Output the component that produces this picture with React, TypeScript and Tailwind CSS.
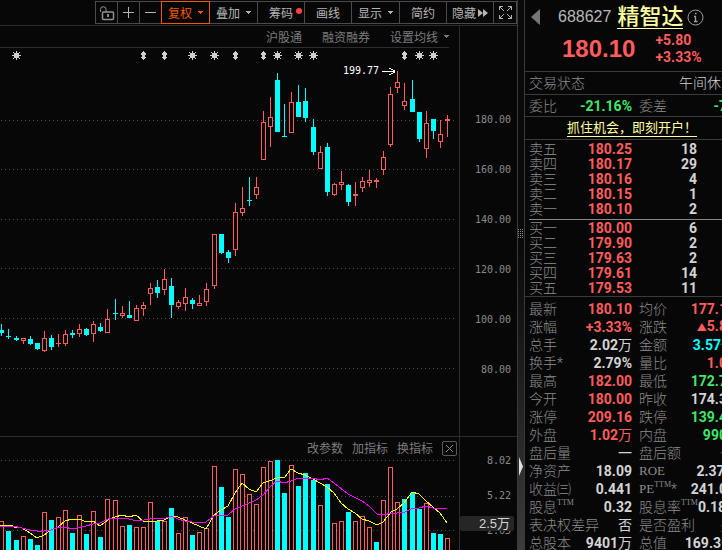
import React from 'react';

type Tone = 'up' | 'down' | 'flat' | 'cyan';

const TONES: Record<Tone, string> = {
  up: 'text-[#ff5c5c]',
  down: 'text-[#3fe669]',
  flat: 'text-[#d4d4d4]',
  cyan: 'text-[#00ffff]',
};

const RED = '#ff5c5c';
const CYAN = '#00ffff';

// x, high, body top, body bottom, low, falling, volume top, volume falling
const CANDLES: number[][] = [
  [1, 324, 330, 333, 336, 1, 521, 0],
  [8, 329, 336, 337, 339, 1, 531, 1],
  [16, 336, 338, 340, 341, 1, 540, 1],
  [23, 338, 338, 341, 344, 0, 536, 0],
  [30, 336, 339, 344, 345, 1, 539, 1],
  [37, 343, 343, 349, 350, 1, 545, 1],
  [44, 331, 338, 351, 352, 0, 512, 0],
  [51, 335, 338, 347, 350, 1, 520, 1],
  [58, 334, 343, 344, 347, 0, 517, 0],
  [65, 330, 334, 344, 346, 0, 510, 0],
  [72, 330, 333, 335, 338, 1, 533, 1],
  [79, 324, 329, 334, 337, 0, 515, 0],
  [86, 328, 329, 335, 336, 1, 534, 1],
  [93, 321, 324, 334, 342, 0, 511, 0],
  [100, 323, 327, 331, 332, 1, 537, 1],
  [107, 309, 319, 333, 333, 0, 499, 0],
  [115, 299, 313, 314, 320, 1, 500, 0],
  [122, 306, 313, 316, 318, 0, 526, 0],
  [129, 301, 315, 318, 318, 1, 525, 1],
  [136, 305, 308, 321, 321, 0, 527, 0],
  [143, 302, 305, 309, 316, 0, 527, 0],
  [150, 283, 288, 294, 305, 0, 502, 0],
  [157, 280, 287, 293, 298, 1, 521, 1],
  [164, 269, 279, 290, 295, 0, 521, 0],
  [171, 278, 286, 305, 318, 1, 508, 1],
  [178, 300, 302, 307, 309, 0, 533, 0],
  [185, 288, 297, 304, 311, 0, 517, 0],
  [192, 298, 300, 304, 309, 1, 535, 1],
  [199, 295, 303, 306, 306, 0, 532, 0],
  [206, 283, 289, 302, 306, 0, 528, 0],
  [214, 234, 234, 286, 289, 0, 466, 0],
  [221, 234, 234, 253, 254, 1, 487, 1],
  [228, 250, 252, 258, 263, 1, 517, 1],
  [235, 203, 212, 250, 256, 0, 469, 0],
  [242, 187, 208, 213, 216, 0, 474, 0],
  [249, 177, 200, 201, 206, 1, 494, 0],
  [256, 177, 187, 195, 199, 0, 504, 0],
  [263, 111, 122, 160, 160, 0, 467, 0],
  [270, 97, 117, 127, 147, 0, 461, 0],
  [277, 73, 80, 132, 132, 1, 460, 1],
  [284, 104, 136, 137, 137, 1, 493, 1],
  [291, 92, 102, 133, 133, 0, 465, 0],
  [298, 85, 102, 117, 117, 1, 486, 1],
  [305, 88, 101, 118, 122, 1, 473, 1],
  [313, 119, 127, 152, 155, 1, 480, 1],
  [320, 146, 152, 169, 169, 0, 505, 0],
  [327, 143, 147, 192, 196, 1, 484, 1],
  [334, 183, 184, 195, 196, 0, 523, 0],
  [341, 171, 182, 185, 190, 0, 521, 0],
  [348, 184, 185, 202, 206, 1, 512, 1],
  [355, 182, 194, 196, 206, 0, 521, 0],
  [362, 177, 181, 188, 192, 0, 516, 0],
  [369, 170, 180, 183, 187, 0, 527, 0],
  [376, 178, 180, 182, 188, 0, 542, 1],
  [383, 151, 157, 170, 175, 0, 500, 0],
  [390, 87, 94, 145, 147, 0, 467, 0],
  [397, 71, 82, 88, 93, 0, 502, 0],
  [404, 83, 101, 106, 110, 0, 499, 1],
  [412, 80, 99, 112, 112, 1, 493, 1],
  [419, 112, 112, 139, 142, 1, 509, 1],
  [426, 111, 123, 149, 158, 0, 503, 0],
  [433, 119, 119, 131, 139, 1, 533, 1],
  [440, 120, 134, 142, 148, 0, 534, 1],
  [447, 115, 119, 121, 137, 0, 538, 0],
];

const MA_FAST =
  '0,525 11,525 14,527 22,528 30,533 37,538 44,535 51,530 58,527 65,521 72,519 80,519 86,522 93,521 100,526 109,519 115,517 122,515 129,517 136,515 143,521 157,521 164,520 171,516 178,517 185,520 192,523 199,526 206,529 214,515 221,510 228,506 235,493 242,483 249,489 256,492 263,483 269,481 277,478 285,477 291,469 298,473 305,475 313,479 320,483 327,487 334,493 341,503 348,509 355,513 362,519 369,521 377,525 383,522 391,512 397,509 404,503 412,492 419,494 426,501 433,507 440,513 447,523';
const MA_SLOW =
  '0,526 13,526 22,528 30,530 37,531 44,531 51,530 58,527 65,527 72,529 86,526 93,524 100,523 108,519 118,518 125,518 137,521 157,518 164,519 171,516 178,519 185,521 192,522 206,522 214,516 228,515 235,509 242,506 249,503 256,500 263,495 270,487 277,481 284,483 291,481 298,478 313,478 320,480 327,478 334,483 348,494 362,501 369,506 377,514 384,515 391,513 397,513 405,512 413,508 419,508 426,506 433,508 447,508';

const STARS = [16, 192, 214, 277, 298, 313, 419, 433];
const ARROWS = [143, 164, 235, 263, 404];

const TOOLS = [
  { label: '复权', caret: true, active: true },
  { label: '叠加', caret: true },
  { label: '筹码', dot: true },
  { label: '画线' },
  { label: '显示', caret: true },
  { label: '简约' },
  { label: '隐藏', forward: true },
];

const ASKS = [
  ['卖五', '180.25', '18'],
  ['卖四', '180.17', '29'],
  ['卖三', '180.16', '4'],
  ['卖二', '180.15', '1'],
  ['卖一', '180.10', '2'],
];

const BIDS = [
  ['买一', '180.00', '6'],
  ['买二', '179.90', '2'],
  ['买三', '179.63', '2'],
  ['买四', '179.61', '14'],
  ['买五', '179.53', '11'],
];

interface Stat {
  label: string;
  value: string;
  tone: Tone;
  ttm?: boolean;
  star?: boolean;
  latin?: boolean;
}

const STATS: [Stat, Stat][] = [
  [{ label: '最新', value: '180.10', tone: 'up' }, { label: '均价', value: '177.12', tone: 'up' }],
  [{ label: '涨幅', value: '+3.33%', tone: 'up' }, { label: '涨跌', value: '▲5.80', tone: 'up' }],
  [{ label: '总手', value: '2.02万', tone: 'flat' }, { label: '金额', value: '3.57亿', tone: 'cyan' }],
  [{ label: '换手', value: '2.79%', tone: 'flat', star: true }, { label: '量比', value: '1.08', tone: 'up' }],
  [{ label: '最高', value: '182.00', tone: 'up' }, { label: '最低', value: '172.70', tone: 'down' }],
  [{ label: '今开', value: '180.00', tone: 'up' }, { label: '昨收', value: '174.30', tone: 'flat' }],
  [{ label: '涨停', value: '209.16', tone: 'up' }, { label: '跌停', value: '139.44', tone: 'down' }],
  [{ label: '外盘', value: '1.02万', tone: 'up' }, { label: '内盘', value: '9903', tone: 'down' }],
  [{ label: '盘后量', value: '一', tone: 'flat' }, { label: '盘后额', value: '一', tone: 'cyan' }],
  [{ label: '净资产', value: '18.09', tone: 'flat' }, { label: 'ROE', value: '2.37%', tone: 'flat', latin: true }],
  [{ label: '收益㈢', value: '0.441', tone: 'flat' }, { label: 'PE', value: '241.08', tone: 'flat', latin: true, ttm: true, star: true }],
  [{ label: '股息', value: '0.32', tone: 'flat', ttm: true }, { label: '股息率', value: '0.18%', tone: 'flat', ttm: true }],
  [{ label: '表决权差异', value: '否', tone: 'flat' }, { label: '是否盈利', value: '是', tone: 'flat' }],
  [{ label: '总股本', value: '9401万', tone: 'flat' }, { label: '总值', value: '169.3亿', tone: 'flat' }],
];

const Caret = () => (
  <svg width="5" height="3" viewBox="0 0 5 3" fill="currentColor" shapeRendering="crispEdges">
    <path d="M0 0h5v1H4v1H3v1H2V2H1V1H0z" />
  </svg>
);

const Toolbar = () => {
  const cell = 'relative flex h-[23px] items-center justify-center border border-[#4a4a4a] -ml-px';
  return (
    <div className="flex h-[25px] items-start justify-end pt-px text-[#b4b4b4]">
      <button className={`${cell} w-[23px]`} aria-label="锁定">
        <svg width="16" height="16" viewBox="0 0 16 16" fill="none" stroke="currentColor">
          <path d="M1.500 7V4.500a2.800 2.800 0 0 1 5.600 0V7" strokeOpacity=".8" />
          <rect x="3.500" y="7" width="11" height="7.500" rx="1" strokeWidth="1.500" strokeOpacity=".8" />
          <path d="M9 9v3" strokeWidth="1.500" />
        </svg>
      </button>
      <button className={`${cell} w-[23px]`} aria-label="放大">
        <svg width="11" height="11" viewBox="0 0 11 11" stroke="currentColor">
          <path d="M0 5.500h11M5.500 0v11" />
        </svg>
      </button>
      <button className={`${cell} w-[23px]`} aria-label="缩小">
        <svg width="11" height="11" viewBox="0 0 11 11" stroke="currentColor">
          <path d="M0 5.500h11" />
        </svg>
      </button>
      {TOOLS.map((tool) => (
        <button
          key={tool.label}
          className={`${cell} gap-1.5 text-xs whitespace-nowrap ${tool.caret ? 'w-[49px]' : 'w-[48px]'} ${
            tool.active ? 'z-10 border-[#f25a00] text-[#f25a00]' : ''
          }`}
        >
          {tool.label}
          {tool.caret && <Caret />}
          {tool.dot && <span className="absolute top-1.5 right-0.5 size-1.5 rounded-full bg-[#ff4040]" />}
          {tool.forward && (
            <svg className="-ml-1" width="10" height="8" viewBox="0 0 10 8" fill="currentColor">
              <path d="M0 0l5 4-5 4zM5 0l5 4-5 4z" />
            </svg>
          )}
        </button>
      ))}
      <button className={`${cell} w-[24px]`} aria-label="全屏">
        <svg width="13" height="13" viewBox="0 0 13 13" fill="none" stroke="currentColor">
          <path d="M.5 4V.5H4M9 .5h3.500V4M12.500 9v3.500H9M4 12.500H.5V9M.5.5l4.500 4.500M12.500.5L8 5M12.500 12.500L8 8M.5 12.500L5 8" />
        </svg>
      </button>
    </div>
  );
};

const GridLine = ({ y }: { y: number }) => (
  <line x1="1" x2="456" y1={y + 0.5} y2={y + 0.5} stroke="#4c4c4c" strokeDasharray="1 3" />
);

const Bar = ({ x, top, bottom, falling }: { x: number; top: number; bottom: number; falling: boolean }) =>
  falling || bottom - top < 3 ? (
    <rect x={x - 2} y={top} width="5" height={bottom - top} fill={falling ? CYAN : RED} />
  ) : (
    <rect x={x - 1.5} y={top + 0.5} width="4" height={bottom - top - 1} fill="#070707" stroke={RED} />
  );

const PriceChart = () => (
  <svg className="block w-full" viewBox="0 48 459 388" shapeRendering="crispEdges" role="img" aria-label="K线图">
    {[120, 169, 219, 268, 318, 368].map((y) => (
      <GridLine key={y} y={y} />
    ))}
    {CANDLES.map(([x, high, top, bottom, low, falling]) => (
      <g key={x}>
        <rect x={x} y={high} width="1" height={low - high} fill={falling ? CYAN : RED} />
        <Bar x={x} top={top} bottom={bottom} falling={falling === 1} />
      </g>
    ))}
    {STARS.map((x) => (
      <path
        key={x}
        d={`M${x - 2} 53h5v5h-5zM${x} 51h1v9h-1zM${x - 4} 55h9v1h-9zM${x - 3} 52h1v1h-1zM${x + 3} 52h1v1h-1zM${x - 3} 58h1v1h-1zM${x + 3} 58h1v1h-1z`}
        fill="#d0d0d0"
      />
    ))}
    {ARROWS.map((x) => (
      <path
        key={x}
        d={`M${x} 51h1v1h1v1h1v2h-1v2h1v1h-1v1h-1v1h-1v-1h-1v-1h-1v-1h1v-2h-1v-2h1v-1h1z`}
        fill="#d0d0d0"
      />
    ))}
    <text x="343" y="74" className="fill-white font-['DejaVu_Sans_Mono',monospace] text-[10px]">
      199.77
    </text>
    <path d="M382 71.500h13M389 68.500h2M391 69.500h2M393 70.500h2M393 72.500h2M391 73.500h2M389 74.500h2" stroke="#fff" />
  </svg>
);

const VolumeChart = () => (
  <svg className="block w-full" viewBox="0 459 459 91" shapeRendering="crispEdges" role="img" aria-label="成交量">
    {[460, 496, 530].map((y) => (
      <GridLine key={y} y={y} />
    ))}
    {CANDLES.map((c) => (
      <Bar key={c[0]} x={c[0]} top={c[6]} bottom={552} falling={c[7] === 1} />
    ))}
    <polyline points={MA_FAST} fill="none" stroke="#ffff00" />
    <polyline points={MA_SLOW} fill="none" stroke="#ff00ff" />
  </svg>
);

const BookTable = ({ rows }: { rows: string[][] }) => (
  <table className="w-[168px] table-fixed border-collapse leading-[15px]">
    <colgroup>
      <col className="w-[40px]" />
      <col className="w-[63px]" />
      <col />
    </colgroup>
    <tbody>
      {rows.map(([label, price, size]) => (
        <tr key={label} className="h-[15px]">
          <th className="p-0 text-left font-light text-[#8c8c8c]">{label}</th>
          <td className="p-0 text-right font-bold text-[#ff5c5c]">{price}</td>
          <td className="p-0 text-right font-bold text-[#d4d4d4]">{size}</td>
        </tr>
      ))}
    </tbody>
  </table>
);

const valueClass = (part: string) => {
  if (part === '▲') return 'text-[10px]';
  return /[一-龥]/.test(part) ? 'font-normal' : '';
};

const StatCell = ({ stat, second }: { stat: Stat; second?: boolean }) => (
  <td className={second ? 'p-0 pl-[7px]' : 'p-0'}>
    <div className="flex h-[18px] items-center justify-between whitespace-nowrap">
      <span className="flex font-light text-[#8c8c8c]">
        <span className={stat.latin ? "font-['Liberation_Serif',serif] text-[13px]" : ''}>{stat.label}</span>
        {stat.ttm && (
          <span className="font-['Liberation_Serif',serif] text-[8px] leading-[10px] font-normal">TTM</span>
        )}
        {stat.star && <span>*</span>}
      </span>
      <span className={`font-bold ${TONES[stat.tone]}`}>
        {stat.value.split(/([一-龥▲])/).map((part, i) => (
          <span key={i} className={valueClass(part)}>
            {part}
          </span>
        ))}
      </span>
    </div>
  </td>
);

const QuotePanel = () => (
  <aside className="w-[198px] shrink-0 overflow-hidden border-l border-[#3a3a3a] font-[Roboto,'Noto_Sans_CJK_SC',sans-serif] text-sm">
    <header className="h-[72px] w-[210px] border-b border-[#3a3a3a] pl-1.5">
      <div className="flex h-[34px] items-center">
        <button aria-label="上一只" className="w-[27px]">
          <svg width="9" height="16" viewBox="0 0 9 16" fill="#777">
            <path d="M9 0v16L0 8z" />
          </svg>
        </button>
        <span className="font-['Liberation_Sans',sans-serif] text-base text-[#b8b8b8]">688627</span>
        <a href="#stock" className="ml-1.5 border-b border-[#ffffa0] text-[22px] leading-[22px] font-medium text-[#ffffa0]">
          精智达
        </a>
        <svg className="ml-1" width="17" height="17" viewBox="0 0 17 17" fill="none" stroke="#a0a0a0">
          <circle cx="8.500" cy="8.500" r="7.500" />
          <path d="M8 4.500h1.500M7 7.500h1.500v5M7 12.500h3.500" strokeWidth="1.300" />
        </svg>
      </div>
      <div className="-mt-0.5 flex items-center pl-[31px] text-[#ff5c5c]">
        <strong className="font-['Liberation_Sans',sans-serif] text-2xl leading-7">180.10</strong>
        <div className="ml-5 text-sm leading-[17px] font-bold">
          <div>+5.80</div>
          <div>+3.33%</div>
        </div>
      </div>
    </header>

    <div className="flex h-[23px] w-[210px] items-center justify-between border-b border-[#3a3a3a] pl-1 font-light">
      <span className="text-[#8c8c8c]">交易状态</span>
      <span className="text-[#d4d4d4]">午间休市</span>
    </div>

    <div className="flex h-[22px] w-[210px] items-center border-b border-[#3a3a3a] pl-1">
      <span className="font-light text-[#8c8c8c]">委比</span>
      <span className="flex-1 text-right font-bold text-[#3fe669]">-21.16%</span>
      <span className="ml-[7px] flex w-[96px] justify-between">
        <span className="font-light text-[#8c8c8c]">委差</span>
        <span className="font-bold text-[#3fe669]">-77</span>
      </span>
    </div>

    <div className="flex h-[23px] w-[210px] items-center border-b border-[#3a3a3a] pl-[42px]">
      <a href="#open-account" className="border-b border-[#ffffa0] text-[13px] leading-4 text-[#ffffa0]">
        抓住机会，即刻开户！
      </a>
    </div>

    <section className="w-[210px] border-b border-[#3a3a3a] pt-0.5 pl-1">
      <BookTable rows={ASKS} />
      <div className="mt-0.5 border-t border-[#858a85]" />
      <div className="pt-px">
        <BookTable rows={BIDS} />
      </div>
    </section>

    <table className="mt-[3px] ml-1 w-[206px] table-fixed border-collapse leading-[18px]">
      <tbody>
        {STATS.map(([left, right]) => (
          <tr key={left.label} className="h-[18px]">
            <StatCell stat={left} />
            <StatCell stat={right} second />
          </tr>
        ))}
      </tbody>
    </table>
  </aside>
);

const Splitter = () => (
  <div className="relative w-[7px] shrink-0 border-l border-[#3a3a3a] bg-linear-to-b from-[#0a0a0a] from-45% to-[#3c3c3c]">
    <svg className="absolute top-[229px] left-0" width="6" height="9" viewBox="0 0 6 9" shapeRendering="crispEdges">
      <path d="M.5 0v9M2.500 0v9M4.500 0v9" stroke="#8a8a8a" strokeDasharray="1 1" />
    </svg>
    <svg className="absolute top-[457px] left-px" width="4" height="19" viewBox="0 0 4 19" fill="#e0e0e0">
      <path d="M0 0l4 9.500L0 19z" />
    </svg>
  </div>
);

const App: React.FC = () => (
  <div className="flex h-screen overflow-hidden bg-[#070707] font-['Noto_Sans_CJK_SC',sans-serif]">
    <main className="flex min-w-0 flex-1 flex-col">
      <Toolbar />

      <div className="flex border-y border-[#2c2c2c]">
        <div className="min-w-0 flex-1">
          <nav className="mr-[10px] flex h-[22px] items-center justify-end gap-5 border-b border-[#2c2c2c] text-xs text-[#7c7c7c]">
            <button>沪股通</button>
            <button>融资融券</button>
            <button className="flex items-center gap-1.5">
              设置均线
              <Caret />
            </button>
          </nav>
          <PriceChart />
        </div>
        <div className="w-[58px] shrink-0 border-l border-[#2c2c2c] pt-[69px] pr-1.5 text-right font-['DejaVu_Sans_Mono',monospace] text-[10px] text-[#8a8a8a]">
          {['180.00', '160.00', '140.00', '120.00', '100.00', '80.00'].map((price) => (
            <div key={price} className="h-[50px] leading-[50px]">
              {price}
            </div>
          ))}
        </div>
      </div>

      <div className="flex flex-1">
        <div className="min-w-0 flex-1">
          <div className="flex h-[22px] items-center justify-end gap-[9px] pr-0.5 text-xs text-[#7c7c7c]">
            <button>改参数</button>
            <button>加指标</button>
            <button>换指标</button>
            <button aria-label="关闭" className="flex size-[15px] items-center justify-center rounded-xs border border-[#5a5a5a]">
              <svg width="7" height="7" viewBox="0 0 7 7" stroke="#8a8a8a">
                <path d="M0 0l7 7M7 0L0 7" />
              </svg>
            </button>
          </div>
          <VolumeChart />
        </div>
        <div className="relative w-[58px] shrink-0 border-l border-[#2c2c2c] pt-[6px] pr-1.5 text-right font-['DejaVu_Sans_Mono',monospace] text-[10px] text-[#8a8a8a]">
          {['8.02', '5.22', '2.65'].map((volume) => (
            <div key={volume} className="h-[35px] leading-[35px]">
              {volume}
            </div>
          ))}
          <div className="absolute top-[79px] right-[3px] left-0 h-[15px] rounded-xs bg-[#262626] pr-1 font-['Liberation_Sans','Noto_Sans_CJK_SC',sans-serif] text-[13px] leading-[15px] text-[#d4d4d4]">
            2.5万
          </div>
        </div>
      </div>
    </main>
    <Splitter />
    <QuotePanel />
  </div>
);

export default App;
